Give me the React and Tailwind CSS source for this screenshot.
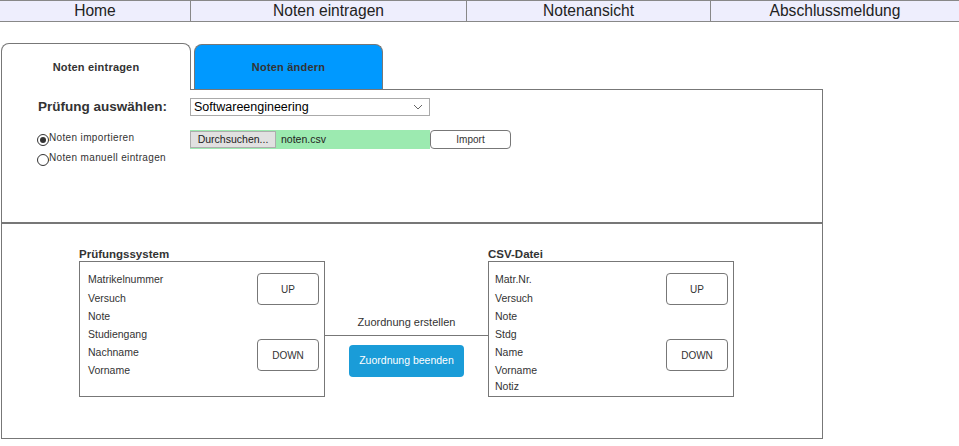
import React from "react";

const navItems = [
  { label: "Home", w: "w-[190px]" },
  { label: "Noten eintragen", w: "w-[276px]" },
  { label: "Notenansicht", w: "w-[244px]" },
  { label: "Abschlussmeldung", w: "flex-1" },
];

const Radio = ({ checked, label }) => (
  <div className="flex items-center h-[20px]">
    <span className="w-[12px] h-[12px] rounded-full border border-[#333] bg-white flex items-center justify-center">
      {checked && <span className="w-[6px] h-[6px] rounded-full bg-[#333]"></span>}
    </span>
    <span className="text-[10px] text-[#333] -mt-[6px] tracking-[0.35px]">{label}</span>
  </div>
);

const SmallButton = ({ children }) => (
  <div className="w-[62px] h-[32px] border border-[#777] rounded-[4px] bg-white flex items-center justify-center text-[10px] text-[#333]">
    {children}
  </div>
);

const FieldBox = ({ title, fields, last, pad }) => (
  <div className="flex flex-col">
    <div className="h-[13px] leading-[13px] text-[11.5px] font-bold text-[#333]">{title}</div>
    <div className="w-[246px] h-[136px] border border-[#777] flex justify-between">
      <div className={`${pad} pt-[8px] flex flex-col`}>
        {fields.map((f, i) => (
          <div
            key={f}
            className={`text-[10.5px] leading-[18px] text-[#333] ${i === 0 ? "mb-px" : ""}`}
          >
            {f}
          </div>
        ))}
        {last && <div className="text-[10.5px] leading-[16px] text-[#333] -mt-[1px]">{last}</div>}
      </div>
      <div className="pr-[5px] pt-[11px] flex flex-col gap-[34px]">
        <SmallButton>UP</SmallButton>
        <SmallButton>DOWN</SmallButton>
      </div>
    </div>
  </div>
);

export default function App() {
  return (
    <div
      className="w-[959px] h-[446px] bg-white overflow-hidden"
      style={{ fontFamily: '"Liberation Sans", Arial, sans-serif' }}
    >
      {/* top navigation */}
      <div className="flex h-[22px] border-y border-[#888] bg-[#eeeefd]">
        {navItems.map((item, i) => (
          <div
            key={item.label}
            className={`${item.w} flex items-center justify-center text-[15.6px] text-[#222] ${i > 0 ? "border-l border-[#888]" : ""}`}
          >
            {item.label}
          </div>
        ))}
      </div>

      {/* tabs */}
      <div className="flex items-end mt-[21px] ml-[1px] relative z-10">
        <div className="w-[190px] h-[47px] border border-b-0 border-[#777] rounded-t-[8px] bg-white -mb-px flex items-center justify-center text-[11px] font-bold text-[#333] tracking-[0.2px]">
          Noten eintragen
        </div>
        <div className="ml-[3px] w-[189px] h-[45px] border border-b-0 border-[#777] rounded-t-[8px] bg-[#0099ff] flex items-center justify-center text-[11px] font-bold text-[#333] tracking-[0.2px]">
          Noten ändern
        </div>
      </div>

      {/* panel */}
      <div className="ml-[1px] w-[822px] h-[350px] border border-[#777] flex flex-col">
        <div className="h-[134px] border-b-2 border-[#777] pt-[7px]">
          <div className="flex items-center">
            <div className="w-[188px] pl-[36px] text-[13.5px] font-bold text-[#333]">Prüfung auswählen:</div>
            <div className="w-[240px] h-[18px] border border-[#aaa] flex items-center justify-between pl-[3px] pr-[6px] text-[12.5px] text-black">
              <span>Softwareengineering</span>
              <svg width="10" height="6" viewBox="0 0 10 6">
                <path d="M1 1 L5 5 L9 1" fill="none" stroke="#666" strokeWidth="1" />
              </svg>
            </div>
          </div>

          <div className="flex mt-[13px]">
            <div className="w-[188px] pl-[35px] flex flex-col">
              <Radio checked label="Noten importieren" />
              <Radio label="Noten manuell eintragen" />
            </div>
            <div className="flex h-[19px]">
              <div className="w-[240px] bg-[#9ceab0] flex items-center">
                <div className="w-[86px] h-[17px] bg-[#e1e1e1] border border-[#adadad] flex items-center justify-center text-[10.5px] text-[#222]">
                  Durchsuchen...
                </div>
                <span className="ml-[5px] text-[10.5px] text-[#222]">noten.csv</span>
              </div>
              <div className="w-[81px] border border-[#777] rounded-[4px] bg-white flex items-center justify-center text-[10px] text-[#333]">
                Import
              </div>
            </div>
          </div>
        </div>

        {/* mapping area */}
        <div className="flex items-start pt-[24px] pl-[77px]">
          <FieldBox
            title="Prüfungssystem"
            pad="pl-[8px]"
            fields={["Matrikelnummer", "Versuch", "Note", "Studiengang", "Nachname", "Vorname"]}
          />
          <div className="w-[163px] flex flex-col items-center pt-[68px]">
            <div className="h-[13px] leading-[13px] text-[11px] text-[#333]">Zuordnung erstellen</div>
            <div className="w-full h-px bg-[#777] mt-[6px]"></div>
            <div className="mt-[9px] w-[115px] h-[32px] rounded-[4px] bg-[#1a9cd8] flex items-center justify-center text-[10.5px] text-white">
              Zuordnung beenden
            </div>
          </div>
          <FieldBox
            title="CSV-Datei"
            pad="pl-[6px]"
            fields={["Matr.Nr.", "Versuch", "Note", "Stdg", "Name", "Vorname"]}
            last="Notiz"
          />
        </div>
      </div>
    </div>
  );
}
